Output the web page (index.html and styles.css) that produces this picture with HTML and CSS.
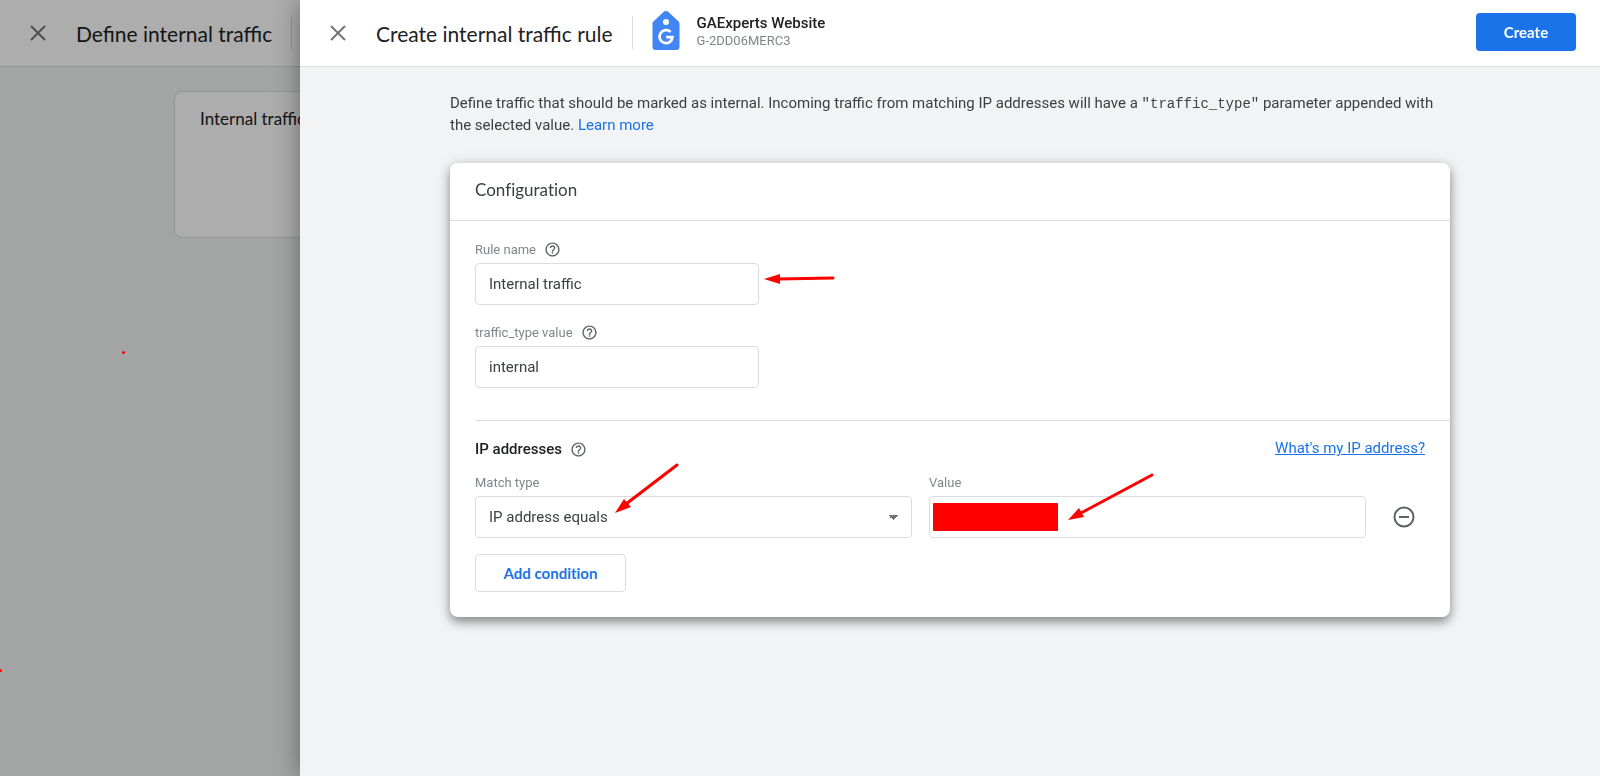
FILE: index.html
```html
<!DOCTYPE html>
<html lang="en">
<head>
    <meta charset="UTF-8">
    <meta name="viewport" content="width=device-width, initial-scale=1.0">
    <title>Create internal traffic rule</title>
    <link rel="stylesheet" href="styles.css">
</head>
<body>
    <!-- page behind the panel -->
    <div class="back-page">
        <header class="topbar">
            <button type="button" class="close" aria-label="Close">
                <svg width="16" height="16" viewBox="0 0 16 16"><path d="M1 1L15 15M15 1L1 15"/></svg>
            </button>
            <h1 class="title">Define internal traffic</h1>
            <span class="separator"></span>
        </header>
        <div class="back-card">Internal traffic</div>
    </div>
    <div class="scrim"></div>

    <div class="panel">
        <header class="topbar">
            <button type="button" class="close" aria-label="Close">
                <svg width="16" height="16" viewBox="0 0 16 16"><path d="M1 1L15 15M15 1L1 15"/></svg>
            </button>
            <h1 class="title">Create internal traffic rule</h1>
            <span class="separator"></span>
            <svg class="logo" width="28" height="40" viewBox="0 0 28 40">
                <path d="M14 0C15 0 16 .4 16.800 1.200L26.600 10.600C27.300 11.300 27.500 12 27.500 13V36C27.500 38 26.300 39 24.500 39H3.500C1.700 39 .5 38 .5 36V13C.5 12 .7 11.300 1.400 10.600L11.200 1.200C12 .4 13 0 14 0Z" fill="#4285f4"/>
                <circle cx="14" cy="11" r="3" fill="#fff"/>
                <path d="M18.600 21A6.500 6.500 0 1 0 20.500 26.200H14.200" fill="none" stroke="#fff" stroke-width="2.700"/>
            </svg>
            <div class="property">
                <span class="property-name">GAExperts Website</span>
                <span class="property-id">G-2DD06MERC3</span>
            </div>
            <button type="submit" form="rule-form" class="create">Create</button>
        </header>

        <main class="content">
            <p class="intro">Define traffic that should be marked as internal. Incoming traffic from matching IP addresses will have a <code>"traffic_type"</code> parameter appended with the selected value. <a href="#">Learn more</a></p>

            <form id="rule-form" class="card">
                <h2 class="card-title">Configuration</h2>

                <div class="section">
                    <div class="field">
                        <div class="label-row">
                            <label for="rule-name">Rule name</label>
                            <svg class="help" viewBox="0 0 24 24"><use href="#help-icon"/></svg>
                        </div>
                        <input type="text" id="rule-name" value="Internal traffic">
                        <svg class="arrow arrow-name" width="72" height="12" viewBox="0 0 72 12">
                            <path d="M14 6L69 5"/><polygon points="0,6 16,1 16,11"/>
                        </svg>
                    </div>
                    <div class="field">
                        <div class="label-row">
                            <label for="type-value">traffic_type value</label>
                            <svg class="help" viewBox="0 0 24 24"><use href="#help-icon"/></svg>
                        </div>
                        <input type="text" id="type-value" value="internal">
                    </div>
                </div>

                <div class="section ip-section">
                    <div class="ip-head">
                        <h3>IP addresses</h3>
                        <svg class="help" viewBox="0 0 24 24"><use href="#help-icon"/></svg>
                        <a href="#" class="my-ip">What's my IP address?</a>
                    </div>
                    <div class="condition">
                        <div class="cell">
                            <label for="match-type">Match type</label>
                            <select id="match-type">
                                <option>IP address equals</option>
                                <option>IP address begins with</option>
                            </select>
                            <svg class="arrow arrow-match" width="66" height="53" viewBox="0 0 66 53">
                                <path d="M11 42L62 3"/><polygon points="0,51 9,37 16,45"/>
                            </svg>
                        </div>
                        <div class="cell">
                            <label for="ip-value">Value</label>
                            <input type="text" id="ip-value">
                            <span class="redacted"></span>
                            <svg class="arrow arrow-value" width="88" height="50" viewBox="0 0 88 50">
                                <path d="M13 41L84 3"/><polygon points="0,48 11,36 16,45"/>
                            </svg>
                        </div>
                        <button type="button" class="remove" aria-label="Remove condition">
                            <svg width="22" height="22" viewBox="0 0 22 22"><circle cx="11" cy="11" r="9.500"/><path d="M6 11H16"/></svg>
                        </button>
                    </div>
                    <button type="button" class="add">Add condition</button>
                </div>
            </form>
        </main>
    </div>

    <!-- stray pen marks -->
    <span class="dot dot-top"></span>
    <span class="dot dot-edge"></span>

    <svg class="defs">
        <symbol id="help-icon" viewBox="0 0 24 24">
            <path d="M11 18h2v-2h-2v2zm1-16C6.480 2 2 6.480 2 12s4.480 10 10 10 10-4.480 10-10S17.520 2 12 2zm0 18c-4.410 0-8-3.590-8-8s3.590-8 8-8 8 3.590 8 8-3.590 8-8 8zm0-14c-2.210 0-4 1.790-4 4h2c0-1.100.9-2 2-2s2 .9 2 2c0 2-3 1.750-3 5h2c0-2.250 3-2.500 3-5 0-2.210-1.790-4-4-4z"/>
        </symbol>
    </svg>
</body>
</html>
```
FILE: styles.css
```css
*{
    box-sizing: border-box;
}
body{
    margin: 0;
    min-height: 100vh;
    padding-left: 300px;
    background-color: #f1f3f4;
    font-family: Roboto, "Liberation Sans", sans-serif;
    font-size: 15px;
    color: #3c4043;
    overflow-x: hidden;
}
h1, h2, h3, p{
    margin: 0;
}
a{
    color: #1a73e8;
    text-decoration: none;
}
button{
    cursor: pointer;
}

/* page behind */
.back-page{
    position: absolute;
    top: 0;
    left: 0;
    width: 300px;
    height: 100%;
    overflow: hidden;
}
.back-card{
    width: 1000px;
    height: 147px;
    margin: 24px 0 0 174px;
    padding: 15px 25px;
    background-color: #fff;
    border: 1px solid #dadce0;
    border-radius: 8px;
    font-family: Lato, sans-serif;
    font-size: 17px;
    line-height: 24px;
    color: #202124;
}
.scrim{
    position: fixed;
    inset: 0;
    background-color: rgba(0,0,0,0.32);
}

/* header */
.topbar{
    display: flex;
    align-items: center;
    height: 67px;
    padding: 0 24px 2px;
    background-color: #fff;
    border-bottom: 1px solid #dadce0;
}
.close{
    display: flex;
    flex: none;
    padding: 0;
    margin: 2px 30px 0 6px;
    border: 0;
    background: none;
}
.close path{
    stroke: #757575;
    stroke-width: 2;
}
.title{
    margin-top: 4px;
    font-family: Lato, sans-serif;
    font-size: 21px;
    font-weight: 400;
    line-height: 28px;
    color: #202124;
    white-space: nowrap;
}
.separator{
    flex: none;
    width: 1px;
    height: 33px;
    margin: 0 19px;
    background-color: #dadce0;
}
.logo{
    flex: none;
    margin-bottom: 2px;
}
.property{
    display: flex;
    flex-direction: column;
    margin-left: 17px;
    line-height: 17px;
}
.property-name{
    font-weight: 500;
    color: #202124;
}
.property-id{
    font-size: 13px;
    color: #80868b;
}
.create{
    width: 100px;
    height: 38px;
    margin-left: auto;
    border: 0;
    border-radius: 4px;
    background-color: #1a73e8;
    color: #fff;
    font-family: Lato, sans-serif;
    font-size: 15px;
    font-weight: 700;
}

/* sliding panel */
.panel{
    position: relative;
    min-height: 100vh;
    background-color: #f1f3f4;
    box-shadow: 0 0 24px rgba(0,0,0,0.4);
}
.content{
    max-width: 1048px;
    margin: 0 auto;
    padding: 25px 24px;
}
.intro{
    line-height: 22px;
}
.intro code{
    font-family: "Liberation Mono", monospace;
    font-size: 14px;
    line-height: 1;
}

.card{
    margin-top: 27px;
    background-color: #fff;
    border-radius: 8px;
    box-shadow: 0 5px 10px rgba(0,0,0,0.35), 0 2px 16px rgba(0,0,0,0.15);
}
.card-title{
    padding: 15px 25px 18px;
    border-bottom: 1px solid #dadce0;
    font-family: Lato, sans-serif;
    font-size: 17px;
    font-weight: 400;
    font-variant-ligatures: none;
    line-height: 24px;
}
.section{
    padding: 18px 25px 0;
}
.field{
    position: relative;
    width: 284px;
    margin-bottom: 17px;
}
.label-row{
    display: flex;
    align-items: center;
    gap: 8px;
    height: 21px;
    margin-bottom: 3px;
}
label{
    font-size: 13px;
    color: #80868b;
}
.help{
    width: 17px;
    height: 17px;
    fill: #5f6368;
}
input, select{
    display: block;
    width: 100%;
    height: 42px;
    padding: 0 13px;
    border: 1px solid #dadce0;
    border-radius: 4px;
    background-color: #fff;
    font-family: inherit;
    font-size: 15px;
    color: #3c4043;
}
select{
    appearance: none;
    background-image: linear-gradient(to bottom right, #757575 50%, transparent 50%), linear-gradient(to bottom left, #757575 50%, transparent 50%);
    background-size: 5px 5px;
    background-position: right 13px center, right 18px center;
    background-repeat: no-repeat;
}

/* ip addresses */
.ip-section{
    margin: 32px 0 0 25px;
    padding: 16px 25px 25px 0;
    border-top: 1px solid #dadce0;
}
.ip-head{
    display: flex;
    align-items: center;
    gap: 8px;
    height: 24px;
}
.ip-head h3{
    font-size: 15px;
    font-weight: 500;
    color: #202124;
}
.my-ip{
    align-self: flex-start;
    margin-left: auto;
    line-height: 22px;
    text-decoration: underline;
}
.condition{
    display: grid;
    grid-template-columns: 1fr 1fr 42px;
    column-gap: 17px;
    align-items: end;
    margin-top: 12px;
}
.cell{
    position: relative;
}
.cell label{
    display: block;
    height: 23px;
    line-height: 20px;
}
.remove{
    display: flex;
    align-items: center;
    justify-content: center;
    height: 42px;
    padding: 0;
    border: 0;
    background: none;
}
.remove svg{
    fill: none;
    stroke: #5f6368;
    stroke-width: 2;
}
.add{
    width: 151px;
    height: 38px;
    margin-top: 16px;
    border: 1px solid #dadce0;
    border-radius: 4px;
    background-color: #fff;
    color: #1a73e8;
    font-family: Lato, sans-serif;
    font-size: 15px;
    font-weight: 700;
    font-variant-ligatures: none;
}

/* red marks */
.arrow{
    position: absolute;
    fill: #f00;
}
.arrow path{
    stroke: #f00;
    stroke-width: 3;
    stroke-linecap: round;
}
.arrow-name{
    left: 289px;
    top: 34px;
}
.arrow-match{
    left: 140px;
    top: -11px;
}
.arrow-value{
    left: 139px;
    top: -1px;
}
.redacted{
    position: absolute;
    left: 4px;
    bottom: 7px;
    width: 125px;
    height: 28px;
    border-radius: 1px;
    background-color: #f00;
}
.dot{
    position: absolute;
    width: 3px;
    height: 3px;
    border-radius: 50%;
    background-color: #f00;
}
.dot-top{
    left: 122px;
    top: 351px;
}
.dot-edge{
    left: -1px;
    top: 669px;
}
.defs{
    position: absolute;
    width: 0;
    height: 0;
}
```
